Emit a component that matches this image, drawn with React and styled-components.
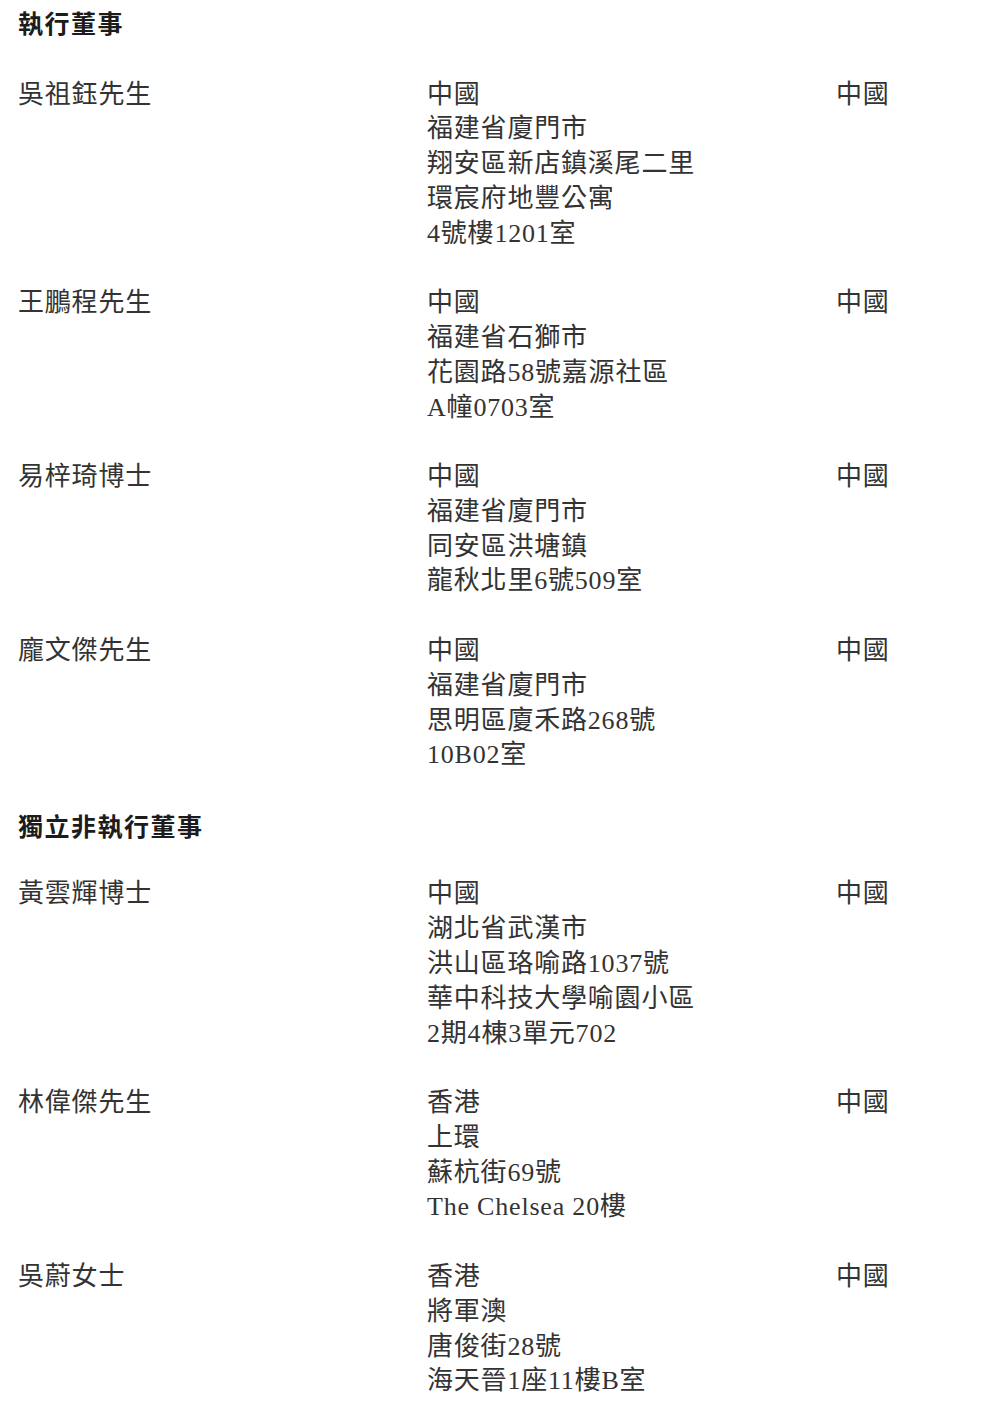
import React from 'react'
import styled, { createGlobalStyle } from 'styled-components'

const LINE = '34.78px'

const GlobalStyle = createGlobalStyle`
    html, body {
        margin: 0;
        padding: 0;
        background: #ffffff;
    }
`

const Page = styled.div`
    display: flex;
    flex-direction: column;
    gap: ${LINE};
    padding: 5px 0 40px 18px;
    font-family: "Liberation Serif", "Noto Sans CJK TC", serif;
    font-size: 26px;
    letter-spacing: 0.8px;
    line-height: ${LINE};
    color: #333333;
`

const Heading = styled.h2`
    margin: 0 0 ${(p) => (p.$lead ? '3px' : '0')} 0;
    font-family: "Noto Sans CJK TC", "Noto Sans", sans-serif;
    font-size: 25px;
    font-weight: 700;
    letter-spacing: 1.5px;
    line-height: ${LINE};
    color: #1c1c1c;
`

const Row = styled.div`
    display: grid;
    grid-template-columns: 409px 409px 1fr;
`

const Cell = styled.div`
    white-space: nowrap;
`

const data = [
    {
        title: '執行董事',
        people: [
            { name: '吳祖鈺先生', address: ['中國', '福建省廈門市', '翔安區新店鎮溪尾二里', '環宸府地豐公寓', '4號樓1201室'], nation: '中國' },
            { name: '王鵬程先生', address: ['中國', '福建省石獅市', '花園路58號嘉源社區', 'A幢0703室'], nation: '中國' },
            { name: '易梓琦博士', address: ['中國', '福建省廈門市', '同安區洪塘鎮', '龍秋北里6號509室'], nation: '中國' },
            { name: '龐文傑先生', address: ['中國', '福建省廈門市', '思明區廈禾路268號', '10B02室'], nation: '中國' },
        ],
    },
    {
        title: '獨立非執行董事',
        people: [
            { name: '黃雲輝博士', address: ['中國', '湖北省武漢市', '洪山區珞喻路1037號', '華中科技大學喻園小區', '2期4棟3單元702'], nation: '中國' },
            { name: '林偉傑先生', address: ['香港', '上環', '蘇杭街69號', 'The Chelsea 20樓'], nation: '中國' },
            { name: '吳蔚女士', address: ['香港', '將軍澳', '唐俊街28號', '海天晉1座11樓B室'], nation: '中國' },
        ],
    },
]

export default function App() {
    return (
        <>
            <GlobalStyle />
            <Page>
                {data.map((section, i) => (
                    <React.Fragment key={section.title}>
                        <Heading $lead={i === 0}>{section.title}</Heading>
                        {section.people.map((p) => (
                            <Row key={p.name}>
                                <Cell>{p.name}</Cell>
                                <Cell>
                                    {p.address.map((line) => (
                                        <div key={line}>{line}</div>
                                    ))}
                                </Cell>
                                <Cell>{p.nation}</Cell>
                            </Row>
                        ))}
                    </React.Fragment>
                ))}
            </Page>
        </>
    )
}
